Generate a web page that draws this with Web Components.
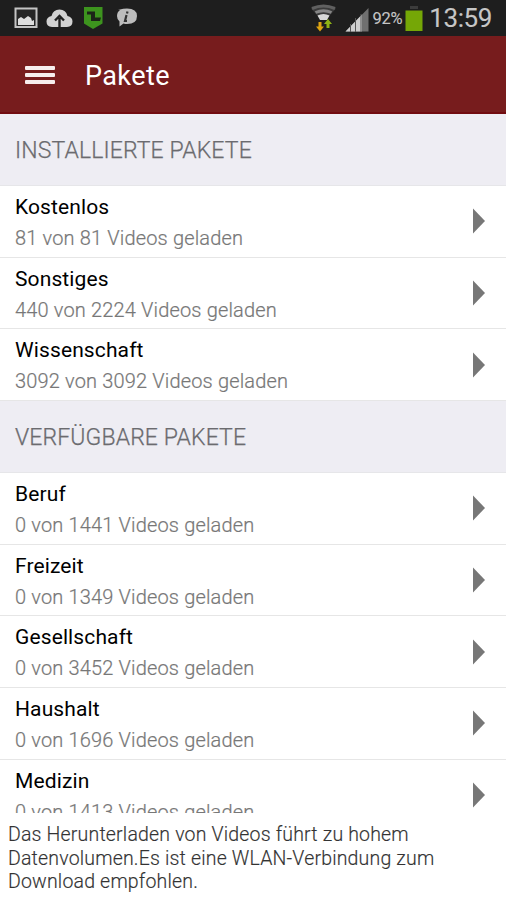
<!DOCTYPE html>
<html lang="de">
<head>
<meta charset="utf-8">
<title>Pakete</title>
<style>
    body {
        margin: 0;
        background: #fff;
        font-family: Roboto, 'Liberation Sans', sans-serif;
    }
</style>
</head>
<body>
<package-app></package-app>

<script>
function define(name, html) {
    const template = document.createElement('template');
    template.innerHTML = html;
    customElements.define(name, class extends HTMLElement {
        constructor() {
            super();
            this.attachShadow({ mode: 'open' });
            this.shadowRoot.appendChild(template.content.cloneNode(true));
        }
    });
}

define('status-bar', `
    <style>
        :host {
            display: flex;
            justify-content: space-between;
            box-sizing: border-box;
            height: 36px;
            padding: 0 14px 0 14px;
            background: #1e1e1e;
            color: #c6c6c6;
        }
        .group { display: flex; align-items: center; }
        svg { display: block; }
        .percent { font-size: 16.500px; letter-spacing: -0.3px; margin: 1px 3px 0 4px; -webkit-text-stroke: 0.1px; }
        .clock { font-size: 26px; line-height: 36px; letter-spacing: -0.4px; margin-left: 6px; -webkit-text-stroke: 0.1px; }
    </style>
    <div class="group">
        <svg width="126" height="36" viewBox="14 0 126 36">
            <rect x="15.500" y="8.500" width="21" height="18.500" fill="#262626" stroke="#c4c4c4" stroke-width="2"/>
            <path d="M18 25v-6l3-2 3 2 4-3 3 2 1 3 2-1v5z" fill="#dedede"/>
            <path d="M52 27q-5.500-.5-5.500-5.500 0-4.500 5-5.500 1.500-6.500 8-6.500t8 6.500q5 1 5 5.500 0 5-5.500 5.500z" fill="#d2d2d2"/>
            <path d="M59.500 27v-9M55 20.500l4.500-4.500 4.500 4.500" fill="none" stroke="#222" stroke-width="2.400"/>
            <path d="M84 7h18.500v16.500L93 29l-9-5.500z" fill="#3d941e"/>
            <path d="M87 11.500h8v6h6l-1 3.500h-9v-6.500h-4z" fill="#1c2518"/>
            <path d="M118 9.500h2q3-1 7-1 10 0 10 7.500 0 8-10 8-2 0-3.500-.5l-4 3v-5q-2.500-2-2.500-5.500 0-4 3-6z" fill="#bdbdbd"/>
            <path d="M127.500 11.500l-.5 2M126.500 15l-1.500 6h2" stroke="#333" stroke-width="2.200" fill="none"/>
        </svg>
    </div>
    <div class="group">
        <svg width="58" height="36" viewBox="310 0 58 36">
            <path d="M310 8.500q12.500-6 25 0l-4.500 5-3 3-2.500 3.500h-5l-2.500-3.500-3-3z" fill="#3a3a3a"/>
            <g fill="none" stroke-width="3">
                <path d="M311 8.500q11.500-5 23 0" stroke="#606060"/>
                <path d="M314.500 12.500q8-3.500 16 0" stroke="#858585"/>
            </g>
            <path d="M316.500 15.500q6-3 12 0l-2.500 4.500h-7z" fill="#d8d8d8"/>
            <path d="M317.500 22h3v4.500h2.500l-4 5-4-5h2.500z" fill="#dda411"/>
            <path d="M325.500 28h3v-4h2.500l-4-5-4 5h2.500z" fill="#8fb414"/>
            <path d="M344.500 31.500L367.500 8v23.500z" fill="#707070"/>
            <path d="M344.500 31.500L361 14.500v17z" fill="#cecece"/>
            <path d="M349.500 24v8M354.500 18v14M360 14v18" stroke="#555" stroke-width="1"/>
        </svg>
        <span class="percent">92%</span>
        <svg width="18" height="36" viewBox="405 0 18 36">
            <path d="M410 6h8v3h-8z" fill="#3c3c3c"/>
            <path d="M405.500 10.500h17V31h-17z" fill="#75a706"/>
        </svg>
        <span class="clock">13:59</span>
    </div>
`);

define('title-bar', `
    <style>
        :host {
            display: flex;
            align-items: center;
            gap: 30px;
            box-sizing: border-box;
            height: 78px;
            padding: 0 25px;
            background: #771c1d;
            border-bottom: 2px solid #710c10;
            color: #fff;
        }
        .bars { display: grid; gap: 3px; width: 30px; margin-top: 1px; }
        .bars i { height: 4px; background: #f7eded; border-radius: 1px; }
        h1 { margin: 5px 0 0; font-size: 27px; font-weight: 400; line-height: 33px; letter-spacing: 0.4px; }
    </style>
    <div class="bars"><i></i><i></i><i></i></div>
    <h1><slot></slot></h1>
`);

define('package-section', `
    <style>
        :host { display: block; }
        h2 {
            box-sizing: border-box;
            height: 72px;
            margin: 0;
            padding: 0 15px;
            background: #eeedf3;
            border-bottom: 1px solid #e6e6e9;
            color: #6b6b6f;
            font-size: 23px;
            font-weight: 300;
            line-height: 73px;
            letter-spacing: 0.12px;
            -webkit-text-stroke: 0.25px;
        }
    </style>
    <h2><slot name="heading"></slot></h2>
    <slot></slot>
`);

define('package-item', `
    <style>
        :host {
            display: flex;
            justify-content: space-between;
            align-items: center;
            box-sizing: border-box;
            height: 71.700px;
            padding: 0 21px 0 15px;
            border-bottom: 1.500px solid #e6e6e6;
            background: #fff;
        }
        .text { padding-top: 3.400px; }
        .name { color: #000; font-size: 21px; line-height: 31px; letter-spacing: 0.12px; }
        .count { color: #777; font-size: 20px; font-weight: 300; line-height: 31px; letter-spacing: 0.16px; -webkit-text-stroke: 0.2px; }
        svg { display: block; }
    </style>
    <div class="text">
        <div class="name"><slot></slot></div>
        <div class="count"><slot name="count"></slot></div>
    </div>
    <svg width="12" height="26" viewBox="0 0 12 26"><path d="M0 0.500L12 13 0 25.500z" fill="#777"/></svg>
`);

define('download-note', `
    <style>
        :host {
            display: block;
            box-sizing: border-box;
            height: 87px;
            padding: 10px 8px 0;
            background: #fff;
            color: #333;
            font-size: 19.500px;
            font-weight: 300;
            line-height: 23.500px;
            letter-spacing: 0.18px;
            -webkit-text-stroke: 0.15px;
        }
    </style>
    <slot></slot>
`);

define('package-app', `
    <style>
        :host { display: flex; flex-direction: column; height: 900px; overflow: hidden; }
        status-bar, title-bar, download-note { flex: none; }
        /* the list scrolls under the note, so its last row is cut */
        main { flex: 1; min-height: 0; overflow: hidden; }
    </style>
    <status-bar></status-bar>
    <title-bar>Pakete</title-bar>
    <main>
        <package-section>
            <span slot="heading">INSTALLIERTE PAKETE</span>
            <package-item>Kostenlos<span slot="count">81 von 81 Videos geladen</span></package-item>
            <package-item>Sonstiges<span slot="count">440 von 2224 Videos geladen</span></package-item>
            <package-item>Wissenschaft<span slot="count">3092 von 3092 Videos geladen</span></package-item>
        </package-section>
        <package-section>
            <span slot="heading">VERFÜGBARE PAKETE</span>
            <package-item>Beruf<span slot="count">0 von 1441 Videos geladen</span></package-item>
            <package-item>Freizeit<span slot="count">0 von 1349 Videos geladen</span></package-item>
            <package-item>Gesellschaft<span slot="count">0 von 3452 Videos geladen</span></package-item>
            <package-item>Haushalt<span slot="count">0 von 1696 Videos geladen</span></package-item>
            <package-item>Medizin<span slot="count">0 von 1413 Videos geladen</span></package-item>
        </package-section>
    </main>
    <download-note>Das Herunterladen von Videos führt zu hohem<br>Datenvolumen.Es ist eine WLAN-Verbindung zum<br>Download empfohlen.</download-note>
`);
</script>
</body>
</html>
